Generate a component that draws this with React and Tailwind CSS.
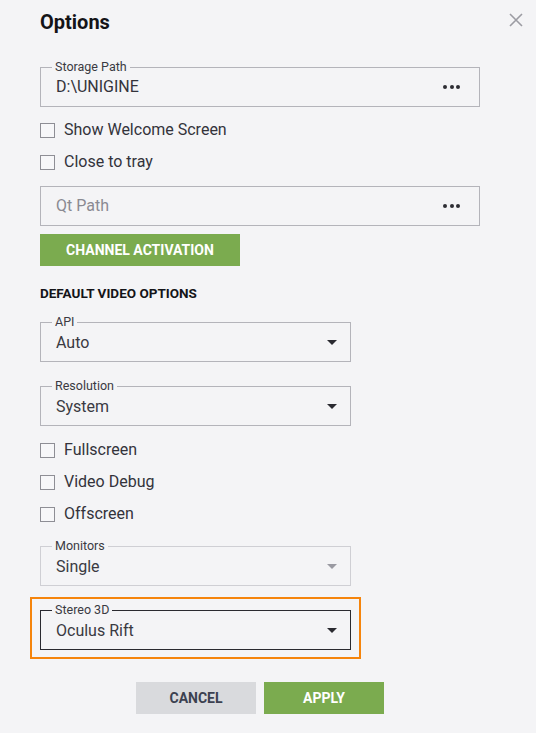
import React from "react";

const Dots = () => (
  <div className="flex items-center gap-[2.5px]">
    <span className="block w-[4px] h-[4px] rounded-full bg-[#2d2d33]" />
    <span className="block w-[4px] h-[4px] rounded-full bg-[#2d2d33]" />
    <span className="block w-[4px] h-[4px] rounded-full bg-[#2d2d33]" />
  </div>
);

const Caret = ({ disabled }) => (
  <svg width="10" height="5" viewBox="0 0 10 5">
    <path d="M0 0 L10 0 L5 5 Z" fill={disabled ? "#9a9aa2" : "#2a2a30"} />
  </svg>
);

const PathField = ({ label, value, placeholder }) => (
  <div className="relative h-10 w-[440px] border border-[#b4b4ba] flex items-center justify-between pl-[15px] pr-[19px]">
    {label && (
      <span className="absolute -top-[9px] left-[11px] px-[3px] bg-[#f4f4f6] text-[12.5px] leading-4 text-[#3a3a42]">
        {label}
      </span>
    )}
    {value ? (
      <span className="text-[16px] text-[#33333b]">{value}</span>
    ) : (
      <span className="text-[16px] text-[#8a8a92]">{placeholder}</span>
    )}
    <Dots />
  </div>
);

const SelectField = ({ label, value, disabled, dark }) => (
  <div
    className={
      "relative h-10 w-[311px] border flex items-center justify-between pl-[15px] pr-[13px] " +
      (dark ? "border-[#2a2a30]" : disabled ? "border-[#cfcfd4]" : "border-[#b4b4ba]")
    }
  >
    <span className="absolute -top-[9px] left-[11px] px-[3px] bg-[#f4f4f6] text-[12.5px] leading-4 text-[#3a3a42]">
      {label}
    </span>
    <span className="text-[16px] text-[#3a3a42] pt-[2px]">{value}</span>
    <Caret disabled={disabled} />
  </div>
);

const Check = ({ label }) => (
  <label className="flex items-center h-5 gap-[9px]">
    <span className="block w-[15px] h-[15px] border border-[#8e8e95] bg-[#f7f7f9]" />
    <span className="text-[16px] text-[#33333b]">{label}</span>
  </label>
);

export default function App() {
  return (
    <div
      className="relative w-[536px] h-[733px] bg-[#f4f4f6] px-10 pt-[10px]"
      style={{ fontFamily: "Roboto, 'Noto Sans', sans-serif" }}
    >
      <button className="absolute top-[13px] right-[13px] text-[#9c9ca3]">
        <svg width="14" height="14" viewBox="0 0 14 14">
          <path d="M1 1 L13 13 M13 1 L1 13" stroke="currentColor" strokeWidth="1.6" />
        </svg>
      </button>

      <h1 className="text-[20px] leading-6 font-bold text-[#141418]">Options</h1>

      <div className="mt-[33px]">
        <PathField label="Storage Path" value="D:\UNIGINE" />
      </div>

      <div className="mt-[13px] flex flex-col gap-3">
        <Check label="Show Welcome Screen" />
        <Check label="Close to tray" />
      </div>

      <div className="mt-[14px]">
        <PathField placeholder="Qt Path" />
      </div>

      <button className="mt-2 w-[200px] h-8 bg-[#7bab4f] text-white text-[14px] font-bold">
        CHANNEL ACTIVATION
      </button>

      <div className="mt-[19px] text-[13.5px] leading-4 font-bold text-[#141418]">
        DEFAULT VIDEO OPTIONS
      </div>

      <div className="mt-[21px]">
        <SelectField label="API" value="Auto" />
      </div>

      <div className="mt-6">
        <SelectField label="Resolution" value="System" />
      </div>

      <div className="mt-[14px] flex flex-col gap-3">
        <Check label="Fullscreen" />
        <Check label="Video Debug" />
        <Check label="Offscreen" />
      </div>

      <div className="mt-[22px]">
        <SelectField label="Monitors" value="Single" disabled />
      </div>

      <div className="mt-[11px] -ml-[10px] w-[331px] h-[62px] border-2 border-[#f5840c] pl-2 pt-[11px]">
        <SelectField label="Stereo 3D" value="Oculus Rift" dark />
      </div>

      <div className="mt-[23px] w-[440px] flex justify-center gap-2">
        <button className="w-[120px] h-8 bg-[#d9dadd] text-[#3c4150] text-[14px] font-bold">
          CANCEL
        </button>
        <button className="w-[120px] h-8 bg-[#7bab4f] text-white text-[14px] font-bold">
          APPLY
        </button>
      </div>
    </div>
  );
}
